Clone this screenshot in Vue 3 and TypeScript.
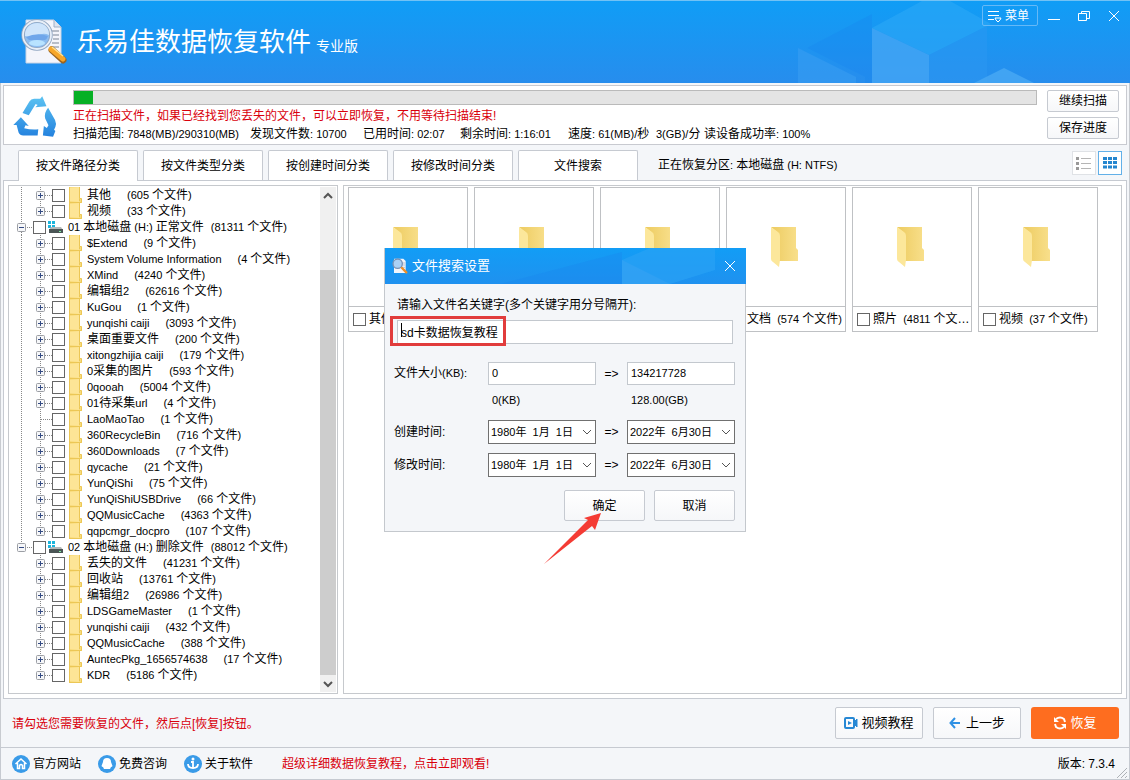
<script setup lang="ts">
import { h, ref } from 'vue'

interface TreeRow {
  name: string
  count: string
  root?: boolean
  leaf?: boolean
  trunk?: boolean
  last?: boolean
}

// Latin letters and digits are set one size smaller than the Chinese text beside them.
const Mixed = (props: { text: string }) =>
  h(
    'span',
    { class: 'mixed' },
    props.text
      .split(/([\x20-\x7e\u00a0]+)/)
      .filter(Boolean)
      .map((part) => (/^[\x20-\x7e\u00a0]/.test(part) ? h('span', { class: 'latin' }, part) : part)),
  )
Mixed.props = ['text']

const child = (name: string, count: string, extra: Partial<TreeRow> = {}): TreeRow => ({
  name,
  count: `(${count} 个文件)`,
  trunk: true,
  ...extra,
})

const tail = { trunk: false }

const rows: TreeRow[] = [
  child('其他', '605'),
  child('视频', '33', { last: true }),
  { name: '01 本地磁盘 (H:) 正常文件', count: '(81311 个文件)', root: true },
  child('$Extend', '9'),
  child('System Volume Information', '4'),
  child('XMind', '4240'),
  child('编辑组2', '62616'),
  child('KuGou', '1'),
  child('yunqishi caiji', '3093'),
  child('桌面重要文件', '200'),
  child('xitongzhijia caiji', '179'),
  child('0采集的图片', '593'),
  child('0qooah', '5004'),
  child('01待采集url', '4'),
  child('LaoMaoTao', '1', { leaf: true }),
  child('360RecycleBin', '716'),
  child('360Downloads', '7'),
  child('qycache', '21'),
  child('YunQiShi', '75'),
  child('YunQiShiUSBDrive', '66'),
  child('QQMusicCache', '4363'),
  child('qqpcmgr_docpro', '107', { last: true }),
  { name: '02 本地磁盘 (H:) 删除文件', count: '(88012 个文件)', root: true, last: true },
  child('丢失的文件', '41231', tail),
  child('回收站', '13761', tail),
  child('编辑组2', '26986', tail),
  child('LDSGameMaster', '1', tail),
  child('yunqishi caiji', '432', tail),
  child('QQMusicCache', '388', tail),
  child('AuntecPkg_1656574638', '17', tail),
  child('KDR', '5186', { trunk: false, last: true }),
]

const tabs = ['按文件路径分类', '按文件类型分类', '按创建时间分类', '按修改时间分类', '文件搜索']
const activeTab = ref(0)

const stats = [
  '扫描范围: 7848(MB)/290310(MB)',
  '发现文件数: 10700',
  '已用时间: 02:07',
  '剩余时间: 1:16:01',
  '速度: 61(MB)/秒',
  '3(GB)/分',
  '读设备成功率: 100%',
]

const folders = [
  '其他\u00a0 (5 个文件)',
  '图片\u00a0 (12 个文件)',
  '音乐\u00a0 (86 个文件)',
  '文档\u00a0 (574 个文件)',
  '照片\u00a0 (4811 个文件)',
  '视频\u00a0 (37 个文件)',
]

const progress = ref(2)
const keyword = ref('sd卡数据恢复教程')
const sizeFrom = ref('0')
const sizeTo = ref('134217728')
const startDate = '1980年\u00a0\u00a01月\u00a0\u00a01日'
const endDate = '2022年\u00a0\u00a06月30日'
const dateRows = ['创建时间:', '修改时间:']
</script>

<template>
  <div class="window">
    <header class="titlebar">
      <svg class="cubes" viewBox="0 0 340 83" aria-hidden="true">
        <path d="M17 48L82 14V28V83H75V77Z" fill="#1685ee" opacity=".3" />
        <path d="M17 48L75 77V83H17Z" fill="#3a9ff3" opacity=".55" transform="translate(-9 0)" />
        <path d="M82 28L132 1H160L201 24L139 55Z" fill="#2ba8f7" opacity=".6" />
        <path d="M82 28L139 55V83H82Z" fill="#43a5f4" opacity=".8" />
        <path d="M139 55L197 26V83H139Z" fill="#2b97f1" opacity=".5" />
        <path d="M184 83L214 68L244 83Z" fill="#48a9f4" opacity=".8" />
      </svg>
      <svg class="logo" viewBox="0 0 46 48" aria-hidden="true">
        <path d="M5 2H33L40 9V45H5Z" fill="#f4f5fb" stroke="#c8d3e4" />
        <path d="M33 2V9H40" fill="#dce3ee" stroke="#9eafc8" />
        <path d="M30 13H38M32 17H38M32 21H38M31 25H38M29 29H38" stroke="#a2aab8" stroke-width="1.5" />
        <circle cx="16" cy="17" r="14" fill="#8dbdf0" stroke="#8fa5c0" stroke-width="3.500" />
        <circle cx="16" cy="17" r="14" fill="none" stroke="#e8eff8" stroke-width="1.800" />
        <path d="M4 18C3 1 29 1 28 17C20 13 12 21 4 18Z" fill="#cfe5fb" />
        <path d="M5 19Q16 14 27 18Q26 21 24 22H8Z" fill="#6fa6ea" />
        <ellipse cx="16" cy="25" rx="8" ry="3" fill="#b8e3ff" />
        <path d="M31 32L42 42" stroke="#9b641f" stroke-width="7" stroke-linecap="round" />
        <path d="M30 31L42 41" stroke="#f7a629" stroke-width="5" stroke-linecap="round" />
        <path d="M31 29L42 38" stroke="#ffe08e" stroke-width="1.500" />
      </svg>
      <h1>乐易佳数据恢复软件</h1>
      <span class="edition">专业版</span>
      <div class="window-tools">
        <button type="button" class="menu">
          <svg width="16" height="14" viewBox="0 0 16 14" aria-hidden="true">
            <path d="M1 2.500H12M1 6.500H12M1 10.500H7" stroke="#fff" fill="none" />
            <path d="M8 9H14L13 11L11 13L9 11Z" stroke="#fff" fill="none" />
          </svg>
          <span>菜单</span>
        </button>
        <button type="button" class="caption" aria-label="最小化">
          <svg width="14" height="14" viewBox="0 0 14 14"><path d="M1 10.500H13" stroke="#fff" /></svg>
        </button>
        <button type="button" class="caption" aria-label="还原">
          <svg width="14" height="14" viewBox="0 0 14 14"><path d="M1.500 4.500H9.500V11.500H1.500ZM4.500 4V2.500H12.500V9.500H10" stroke="#fff" fill="none" /></svg>
        </button>
        <button type="button" class="caption" aria-label="关闭">
          <svg width="14" height="14" viewBox="0 0 14 14"><path d="M2 2L12 12M12 2L2 12" stroke="#fff" /></svg>
        </button>
      </div>
    </header>

    <div class="body">
      <section class="scan">
        <svg class="recycle" viewBox="36 46 134 128" aria-hidden="true">
          <defs>
            <linearGradient id="recycle-blue" gradientUnits="userSpaceOnUse" x1="0" y1="48" x2="0" y2="172">
              <stop offset="0" stop-color="#5cc3f2" />
              <stop offset="1" stop-color="#2482de" />
            </linearGradient>
          </defs>
          <g fill="url(#recycle-blue)">
            <path d="M65 99L86 64Q91 56 100 56H119L125 48L138 79L104 82L111 75L105 72L84 106Z" />
            <path d="M143 83L164 121Q169 132 165 142L161 150L165 154L158 172L127 168L130 139L139 145L144 137L134 116Q130 98 143 83Z" />
            <path d="M37 136L60 112L84 139L74 137L70 146Q91 151 113 149L111 168H67Q57 168 53 159L47 136Z" />
          </g>
        </svg>
        <div class="scan-info">
          <div class="progress" role="progressbar" aria-label="扫描进度" :aria-valuenow="progress">
            <div class="bar" :style="{ width: progress + '%' }"></div>
          </div>
          <p class="alert">正在扫描文件，如果已经找到您丢失的文件，可以立即恢复，不用等待扫描结束!</p>
          <div class="stats">
            <Mixed v-for="s in stats" :key="s" :text="s" />
          </div>
        </div>
        <div class="scan-actions">
          <button type="button" class="btn">继续扫描</button>
          <button type="button" class="btn">保存进度</button>
        </div>
      </section>

      <nav class="tabs">
        <button
          v-for="(t, i) in tabs"
          :key="t"
          type="button"
          class="tab"
          :class="{ active: i === activeTab }"
          @click="activeTab = i"
        >{{ t }}</button>
        <Mixed class="partition" text="正在恢复分区: 本地磁盘 (H: NTFS)" />
        <div class="views">
          <button type="button" class="view" aria-label="列表视图">
            <svg width="16" height="14" viewBox="0 0 16 14">
              <path d="M0 2.500H3M0 7.500H3M0 12.500H3" stroke="#999" stroke-width="3" />
              <path d="M5 2.500H15M5 7.500H15M5 12.500H15" stroke="#b5b5b5" />
            </svg>
          </button>
          <button type="button" class="view on" aria-label="图标视图">
            <svg width="14" height="12" viewBox="0 0 14 12">
              <path d="M0 1.500H14M0 5.500H14M0 10H14" stroke="#2486cf" stroke-width="3" stroke-dasharray="4 1" />
            </svg>
          </button>
        </div>
      </nav>

      <main class="workspace">
        <div class="tree">
          <ul>
            <li v-for="(r, i) in rows" :key="i">
              <svg v-if="r.root" class="guide" width="24" height="16" viewBox="0 0 24 16" aria-hidden="true">
                <path :d="r.last ? 'M12.5 0V3' : 'M12.5 0V3M12.5 13V16'" class="dots" />
                <path d="M18 8.500H24" class="dots" />
                <rect x="8.500" y="4.500" width="8" height="8" rx="1" class="expander" />
                <path d="M10 8.500H15" class="sign" />
              </svg>
              <svg v-else class="guide" width="43" height="16" viewBox="0 0 43 16" aria-hidden="true">
                <path v-if="r.trunk" d="M12.500 0V16" class="dots" />
                <path :d="r.last ? 'M31.5 0V8' : 'M31.5 0V16'" class="dots" />
                <path d="M32 8.500H43" class="dots" />
                <template v-if="!r.leaf">
                  <rect x="27.500" y="4.500" width="8" height="8" rx="1" class="expander" />
                  <path d="M29 8.500H34M31.500 6V11" class="sign" />
                </template>
              </svg>
              <label>
                <input type="checkbox" />
                <svg v-if="r.root" class="drive" width="15" height="14" viewBox="0 0 15 14" aria-hidden="true">
                  <path d="M0 1H3V4H0ZM4 1H7V4H4ZM0 5H3V8H0ZM4 5H7V8H4Z" fill="#1db5dc" />
                  <path d="M3 7H13L15 10H1Z" fill="#b5b8b8" />
                  <path d="M1 9H15V13H1Z" fill="#4b5555" />
                  <path d="M11 11H13V12H11Z" fill="#7df0a0" />
                </svg>
                <svg v-else class="folder" width="13" height="16" viewBox="0 0 13 16" aria-hidden="true">
                  <path d="M0 0H11V11L13 12V16H0Z" fill="#f8db7c" />
                  <path d="M1 1L10 0V15L1 14Z" fill="#fde596" />
                  <path d="M.5 0V15M0 15.500H12.500V11.500H10.500V14M10.500 0V11" stroke="#ecc755" fill="none" />
                </svg>
                <Mixed class="name" :class="{ root: r.root }" :text="r.name" />
                <Mixed :text="r.count" />
              </label>
            </li>
          </ul>
          <div class="scrollbar" aria-hidden="true">
            <svg width="16" height="17" viewBox="0 0 16 17"><path d="M4 11L8 7L12 11" class="chev" /></svg>
            <div class="track"><div class="thumb"></div></div>
            <svg width="16" height="17" viewBox="0 0 16 17"><path d="M4 7L8 11L12 7" class="chev" /></svg>
          </div>
        </div>

        <div class="files">
          <article v-for="f in folders" :key="f" class="card">
            <div class="preview">
              <svg width="32" height="42" viewBox="0 0 32 42" aria-hidden="true">
                <defs>
                  <linearGradient id="folder-back" x1="0" y1="0" x2="1" y2="0">
                    <stop offset="0" stop-color="#edcb60" />
                    <stop offset="1" stop-color="#f8df8b" />
                  </linearGradient>
                </defs>
                <path d="M1 1H26V22L28 24V35H8V7Z" fill="url(#folder-back)" />
                <path d="M1 1L8 6Q10 7 10 10V34L9 41L3 36Q1 35 1 33Z" fill="#fce79b" />
              </svg>
            </div>
            <label class="card-label">
              <input type="checkbox" />
              <Mixed class="card-text" :text="f" />
            </label>
          </article>
        </div>
      </main>

      <div class="actions">
        <p class="alert">请勾选您需要恢复的文件，然后点[恢复]按钮。</p>
        <button type="button" class="btn large">
          <svg width="14" height="12" viewBox="0 0 14 12" aria-hidden="true">
            <rect x="1" y="1" width="9" height="10" rx="1" fill="none" stroke="#2788d4" stroke-width="2" />
            <path d="M4 4L8 6L4 8Z" fill="#2788d4" />
            <path d="M10 5L13 2V10L10 7" fill="#2788d4" stroke="#2788d4" />
          </svg>
          视频教程
        </button>
        <button type="button" class="btn large back">
          <svg width="12" height="12" viewBox="0 0 12 12" aria-hidden="true">
            <path d="M6 1L1.500 6L6 11M2 6H11" stroke="#2f91e4" stroke-width="2" fill="none" />
          </svg>
          上一步
        </button>
        <button type="button" class="btn large primary">
          <svg width="14" height="14" viewBox="0 0 14 14" aria-hidden="true">
            <path d="M3 3Q7 0 11 3L12 6M11 11Q7 14 3 11L2 8" stroke="#fff" stroke-width="2" fill="none" />
            <path d="M1 1V6H6ZM13 13V8H8Z" fill="#fff" />
          </svg>
          恢复
        </button>
      </div>
    </div>

    <footer class="footer">
      <a href="#">
        <svg width="18" height="18" viewBox="0 0 18 18" aria-hidden="true">
          <circle cx="9" cy="9" r="9" fill="#3a9be8" />
          <path d="M3.500 9L9 4L14.500 9M5.500 8V13.500H7.500V10.500Q9 8.500 10.500 10.500V13.500H12.500V8" stroke="#fff" stroke-width="1.500" fill="none" />
        </svg>
        官方网站
      </a>
      <a href="#">
        <svg width="18" height="18" viewBox="0 0 18 18" aria-hidden="true">
          <circle cx="9" cy="9" r="9" fill="#3a9be8" />
          <path d="M9 3Q13 3 13 7L14.500 11Q14 12 13 12L12 14H6L5 12Q4 12 3.500 11L5 7Q5 3 9 3Z" fill="#fff" />
        </svg>
        免费咨询
      </a>
      <a href="#">
        <svg width="18" height="18" viewBox="0 0 18 18" aria-hidden="true">
          <circle cx="9" cy="9" r="9" fill="#3a9be8" />
          <circle cx="9" cy="4" r="1.500" fill="#fff" />
          <path d="M7 7H9V12M4 9Q4 13 9 13Q14 13 14 9" stroke="#fff" stroke-width="1.800" fill="none" />
        </svg>
        关于软件
      </a>
      <a href="#" class="guide-link">超级详细数据恢复教程，点击立即观看!</a>
      <span class="version">版本: 7.3.4</span>
      <svg class="grip" width="12" height="12" viewBox="0 0 12 12" aria-hidden="true">
        <path d="M1 11L11 1M5 11L11 5M9 11L11 9" stroke="#aeb2b7" />
      </svg>
    </footer>

    <div class="overlay">
      <form class="dialog" role="dialog" aria-labelledby="dialog-title" @submit.prevent>
        <div class="dialog-head">
          <svg class="dialog-cubes" viewBox="0 0 246 36" aria-hidden="true">
            <path d="M0 36L122 4V36Z" fill="#1a87ed" opacity=".35" />
            <path d="M122 12L150 0H215V22L170 36H122Z" fill="#2ba4f5" opacity=".6" />
            <path d="M122 12L170 36H122Z" fill="#3aa4f4" opacity=".5" />
          </svg>
          <svg class="dialog-logo" width="16" height="16" viewBox="0 0 46 48" aria-hidden="true">
            <path d="M5 2H33L40 9V45H5Z" fill="#f4f5fb" />
            <path d="M29 15H38M31 21H38M28 28H38" stroke="#a2aab8" stroke-width="2" />
            <circle cx="16" cy="17" r="14" fill="#a9d0f5" stroke="#7892b5" stroke-width="4" />
            <path d="M29 30L42 43" stroke="#ee9029" stroke-width="7" stroke-linecap="round" />
          </svg>
          <h2 id="dialog-title">文件搜索设置</h2>
          <button type="button" class="caption" aria-label="关闭对话框">
            <svg width="14" height="14" viewBox="0 0 14 14"><path d="M2 2L12 12M12 2L2 12" stroke="#fff" /></svg>
          </button>
        </div>
        <div class="dialog-body">
          <div class="keyword">
            <label for="keyword">请输入文件名关键字(多个关键字用分号隔开):</label>
            <input id="keyword" v-model="keyword" type="text" />
            <span class="highlight" aria-hidden="true"></span>
            <span class="caret" aria-hidden="true"></span>
          </div>
          <div class="range size">
            <label for="size-from"><Mixed text="文件大小(KB):" /></label>
            <input id="size-from" v-model="sizeFrom" type="text" />
            <span class="to">=&gt;</span>
            <input v-model="sizeTo" type="text" aria-label="最大文件大小" />
          </div>
          <div class="range hints">
            <span></span><span class="hint">0(KB)</span><span></span><span class="hint">128.00(GB)</span>
          </div>
          <div v-for="(d, i) in dateRows" :key="d" class="range date">
            <label :for="'date-' + i">{{ d }}</label>
            <span class="picker">
              <select :id="'date-' + i"><option>{{ startDate }}</option></select>
              <svg width="10" height="6" viewBox="0 0 10 6" aria-hidden="true"><path d="M1 1L5 5L9 1" /></svg>
            </span>
            <span class="to">=&gt;</span>
            <span class="picker">
              <select :aria-label="d + ' 截止'"><option>{{ endDate }}</option></select>
              <svg width="10" height="6" viewBox="0 0 10 6" aria-hidden="true"><path d="M1 1L5 5L9 1" /></svg>
            </span>
          </div>
          <div class="dialog-actions">
            <button type="submit" class="btn">确定</button>
            <button type="button" class="btn">取消</button>
          </div>
        </div>
        <svg class="pointer" width="58" height="52" viewBox="0 0 58 52" aria-hidden="true">
          <path d="M0 51L44 7L40 5L57 0L51 17L48 13Z" fill="#f43b34" />
        </svg>
      </form>
    </div>
  </div>
</template>

<style>
body {
  margin: 0;
}

.latin {
  font-size: 11px;
  white-space: pre;
}
</style>

<style scoped>
* {
  box-sizing: border-box;
}

.window {
  position: relative;
  display: flex;
  flex-direction: column;
  min-height: 100vh;
  background: #f4f6f9;
  color: #000;
  font: 12px/16px "Liberation Sans", "Noto Sans CJK SC", sans-serif;
  white-space: nowrap;
}

svg {
  display: block;
  flex: none;
}

h1,
h2,
p,
ul {
  margin: 0;
  padding: 0;
}

button,
input,
select {
  margin: 0;
  padding: 0;
  font: inherit;
  color: inherit;
}

label {
  display: flex;
  align-items: center;
}

input[type='checkbox'] {
  appearance: none;
  flex: none;
  width: 13px;
  height: 13px;
  border: 1px solid #666;
  background: #fff;
}

.titlebar {
  position: relative;
  display: flex;
  align-items: center;
  height: 83px;
  padding-left: 21px;
  border-top: 1px solid #72c2f5;
  background: linear-gradient(#109df6, #278ded);
  color: #fff;
}

.cubes {
  position: absolute;
  right: 0;
  bottom: 0;
  width: 340px;
  height: 83px;
}

.logo {
  width: 46px;
  height: 48px;
  margin-right: 10px;
}

h1 {
  font-size: 26px;
  line-height: 36px;
  font-weight: 400;
}

.edition {
  margin-left: 5px;
  padding-top: 8px;
  font-size: 14px;
}

.window-tools {
  position: relative;
  display: flex;
  align-items: center;
  align-self: flex-start;
  gap: 16px;
  margin-left: auto;
  padding: 4px 9px 0 0;
}

.menu {
  display: flex;
  align-items: center;
  gap: 2px;
  width: 56px;
  height: 21px;
  margin-right: -7px;
  padding-left: 4px;
  border: 1px solid #66b9f7;
  border-radius: 2px;
  background: none;
}

.caption {
  border: 0;
  background: none;
}

.body {
  display: flex;
  flex: 1;
  flex-direction: column;
  padding: 2px 2px 0;
  border: 1px solid #c8cbd0;
  border-width: 0 1px;
}

.scan {
  display: flex;
  height: 60px;
  padding: 4px 7px 0 9px;
  border: 1px solid #c8cad0;
  background: #fff;
}

.recycle {
  width: 44px;
  height: 43px;
  margin: 5px 16px 0 0;
}

.scan-info {
  flex: 1;
}

.progress {
  height: 15px;
  border: 1px solid #bababa;
  background: #e4e4e4;
}

.bar {
  height: 100%;
  background: #06b025;
}

.alert {
  color: #d9000b;
}

.scan-info .alert {
  margin-top: 3px;
}

.stats {
  display: grid;
  grid-template-columns: 177px 113px 97px 108px 88px 48px auto;
  margin-top: 2px;
}

.scan-actions {
  display: flex;
  flex-direction: column;
  gap: 5px;
  margin-left: 10px;
}

.btn {
  display: flex;
  align-items: center;
  justify-content: center;
  width: 72px;
  height: 22px;
  border: 1px solid #c6cad1;
  border-radius: 2px;
  background: linear-gradient(#fff, #f6f7f9);
}

.tabs {
  display: flex;
  align-items: flex-end;
  gap: 5px;
  height: 35px;
  padding: 0 5px 0 15px;
}

.tab {
  width: 120px;
  height: 30px;
  border: 1px solid #c6cad1;
  border-bottom: 0;
  border-radius: 2px 2px 0 0;
  background: #fff;
}

.tab.active {
  z-index: 1;
  height: 31px;
  margin-bottom: -1px;
}

.partition {
  padding: 0 0 7px 15px;
}

.views {
  display: flex;
  gap: 2px;
  margin: 0 0 5px auto;
}

.view {
  display: grid;
  place-items: center;
  width: 24px;
  height: 24px;
  border: 1px solid #dfe2e6;
  background: #fff;
}

.view.on {
  border-color: #62b0e8;
}

.workspace {
  display: flex;
  flex: 1;
  gap: 5px;
  padding: 4px;
  border: 1px solid #c6cad1;
  background: #fff;
}

.tree {
  display: flex;
  flex: none;
  width: 330px;
  padding: 1px;
  padding-left: 0;
  border: 1px solid #c6c9cd;
}

ul {
  flex: 1;
  list-style: none;
}

li {
  display: flex;
  height: 16px;
}

.dots {
  fill: none;
  stroke: #888;
  stroke-dasharray: 1 1;
}

.expander {
  fill: #f6f7f9;
  stroke: #9b9ea4;
}

.sign {
  stroke: #344b83;
}

.drive {
  margin: 0 5px 0 2px;
}

.folder {
  margin: 0 5px 0 4px;
}

.name {
  margin-right: 16px;
}

.name.root {
  margin-right: 7px;
}

.scrollbar {
  display: flex;
  flex-direction: column;
  width: 16px;
  background: #f0f0f0;
}

.track {
  display: flex;
  flex: 1;
  align-items: flex-end;
}

.thumb {
  width: 100%;
  height: 86%;
  background: #cdcdcd;
}

.chev {
  fill: none;
  stroke: #555;
  stroke-width: 2;
}

.files {
  display: flex;
  flex: 1;
  flex-wrap: wrap;
  align-content: flex-start;
  gap: 6px;
  padding: 1px 4px;
  border: 1px solid #c6c9cd;
}

.card {
  width: 120px;
  border: 1px solid #bfc1c4;
}

.preview {
  display: grid;
  place-items: center;
  height: 118px;
}

.card-label {
  gap: 3px;
  height: 25px;
  padding-left: 4px;
  border-top: 1px solid #bfc1c4;
}

.card-text {
  overflow: hidden;
  text-overflow: ellipsis;
}

.actions {
  display: flex;
  align-items: center;
  gap: 10px;
  height: 48px;
  padding: 0 8px 0 9px;
}

.actions .alert {
  margin-right: auto;
  padding-top: 2px;
}

.btn.large {
  gap: 3px;
  width: 88px;
  height: 32px;
  font-size: 13px;
}

.btn.back {
  gap: 5px;
}

.btn.primary {
  border: 0;
  border-radius: 3px;
  background: #fe6d1f;
  color: #fff;
}

.footer {
  display: flex;
  align-items: center;
  gap: 17px;
  height: 33px;
  padding: 0 1px 0 11px;
  border: 1px solid #c6cad1;
}

a {
  display: flex;
  align-items: center;
  gap: 3px;
  color: inherit;
  text-decoration: none;
}

.guide-link {
  margin-left: 12px;
  color: #d9000b;
}

.version {
  margin-left: auto;
}

.grip {
  align-self: flex-end;
  margin-left: -16px;
}

.overlay {
  position: absolute;
  inset: 0;
  display: grid;
  place-items: center;
}

.dialog {
  position: relative;
  width: 362px;
  border: 1px solid #c4c8cd;
  border-top: 0;
  background: #f4f6f9;
}

.dialog-head {
  position: relative;
  display: flex;
  align-items: center;
  height: 36px;
  margin-right: -1px;
  padding: 0 9px 0 7px;
  background: linear-gradient(#129df6, #1f91ef);
  color: #fff;
}

.dialog-cubes {
  position: absolute;
  right: 0;
  top: 0;
  width: 246px;
  height: 36px;
}

.dialog-logo {
  position: relative;
  margin-right: 4px;
}

h2 {
  position: relative;
  font-size: 13px;
  line-height: 18px;
  font-weight: 400;
}

.dialog-head .caption {
  position: relative;
  margin-left: auto;
}

.dialog-body {
  padding: 13px 10px 10px 9px;
}

.keyword {
  position: relative;
  padding: 0 2px 0 3px;
}

.keyword label {
  height: 16px;
  margin-bottom: 7px;
}

input[type='text'] {
  width: 100%;
  height: 23px;
  padding: 0 3px 2px;
  border: 1px solid #c3c8ce;
  background: #fff;
  font-size: 11px;
}

.keyword input[type='text'] {
  height: 24px;
  font-size: 12px;
}

.highlight {
  position: absolute;
  top: 19px;
  left: -4px;
  width: 116px;
  height: 30px;
  border: 3px solid #e13c3c;
}

.caret {
  position: absolute;
  top: 26px;
  left: 7px;
  width: 1px;
  height: 14px;
  background: #000;
}

.range {
  display: grid;
  grid-template-columns: 94px 108px 31px 108px;
  align-items: center;
}

.size {
  margin-top: 18px;
}

.size label {
  padding-bottom: 2px;
}

.to {
  text-align: center;
}

.hints {
  margin: 7px 0 12px;
}

.hint {
  padding-left: 4px;
  font-size: 11px;
}

.date {
  margin-bottom: 9px;
}

.picker {
  position: relative;
}

select {
  display: block;
  appearance: none;
  width: 100%;
  height: 24px;
  padding-left: 2px;
  border: 1px solid #707070;
  border-radius: 0;
  background: #fff;
  font-size: 11px;
}

.picker svg {
  position: absolute;
  top: 9px;
  right: 4px;
  fill: none;
  stroke: #555;
  pointer-events: none;
}

.dialog-actions {
  display: flex;
  justify-content: flex-end;
  gap: 9px;
  margin-top: 13px;
}

.dialog-actions .btn {
  width: 81px;
  height: 31px;
}

.pointer {
  position: absolute;
  left: 159px;
  top: 265px;
}
</style>
